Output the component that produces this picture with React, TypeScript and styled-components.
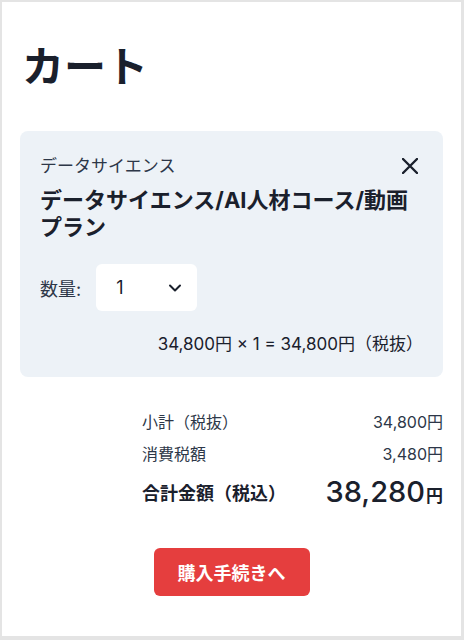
import React, { useState } from 'react';
import styled, { createGlobalStyle } from 'styled-components';

const GlobalStyle = createGlobalStyle`
  html, body {
    margin: 0;
    padding: 0;
    background: #e4e4e4;
  }
  body {
    font-family: 'Inter', 'Noto Sans CJK JP', sans-serif;
    color: #1a202c;
  }
  #root {
    padding: 2px 3px 4px 2px;
  }
`;

const Panel = styled.div`
  background: #ffffff;
  min-height: 634px;
  box-sizing: border-box;
  padding: 40px 18px 20px;
  display: flex;
  flex-direction: column;
`;

const Title = styled.h1`
  margin: 0 0 39px 2px;
  font-size: 42px;
  line-height: 50px;
  font-weight: 700;
`;

const Card = styled.div`
  background: #edf2f7;
  border-radius: 8px;
  padding: 22px 20px 21px;
`;

const CardHeader = styled.div`
  display: flex;
  align-items: center;
  justify-content: space-between;
`;

const Category = styled.div`
  font-size: 17px;
  line-height: 26px;
  color: #2d3748;
`;

const RemoveButton = styled.button`
  border: none;
  background: none;
  padding: 0;
  margin-right: 5px;
  width: 16px;
  height: 16px;
  display: flex;
  cursor: pointer;
  color: #1a202c;
`;

const ProductName = styled.div`
  margin-top: 8px;
  font-size: 22px;
  line-height: 27px;
  font-weight: 700;
  padding-right: 12px;
`;

const QtyRow = styled.div`
  display: flex;
  align-items: center;
  gap: 15px;
  margin-top: 23px;
`;

const QtyLabel = styled.span`
  font-size: 18px;
  color: #2d3748;
`;

const QtySelect = styled.div`
  width: 101px;
  height: 47px;
  box-sizing: border-box;
  background: #ffffff;
  border-radius: 6px;
  display: flex;
  align-items: center;
  justify-content: space-between;
  padding: 0 15px 0 20px;
  font-size: 18px;
  cursor: pointer;
`;

const LinePrice = styled.div`
  margin-top: 21px;
  text-align: right;
  font-size: 17px;
  line-height: 24px;
  color: #1a202c;
`;

const Summary = styled.div`
  width: 301px;
  margin: 29px 0 0 auto;
`;

const SummaryRow = styled.div`
  display: flex;
  justify-content: space-between;
  align-items: baseline;
  font-size: 16px;
  line-height: 32px;
  color: #2d3748;
`;

const TotalRow = styled.div`
  display: flex;
  justify-content: space-between;
  align-items: center;
  margin-top: 2px;
  line-height: 40px;
`;

const TotalLabel = styled.span`
  font-size: 18px;
  font-weight: 700;
`;

const TotalAmount = styled.span`
  font-size: 29px;
  font-weight: 500;
`;

const Yen = styled.span`
  font-size: 17px;
  font-weight: 700;
  margin-left: 1px;
`;

const Actions = styled.div`
  display: flex;
  justify-content: center;
  margin-top: 32px;
`;

const CheckoutButton = styled.button`
  height: 48px;
  padding: 0 24px;
  border: none;
  border-radius: 6px;
  background: #e53e3e;
  color: #ffffff;
  font-family: inherit;
  font-size: 18px;
  font-weight: 700;
  cursor: pointer;
`;

const CloseIcon: React.FC = () => (
  <svg width="16" height="16" viewBox="0 0 16 16" fill="none">
    <path
      d="M1 1L15 15M15 1L1 15"
      stroke="currentColor"
      strokeWidth="2.4"
      strokeLinecap="round"
    />
  </svg>
);

const Chevron: React.FC = () => (
  <svg width="14" height="8" viewBox="0 0 14 8" fill="none">
    <path
      d="M2 1.5L7 6.5L12 1.5"
      stroke="#1a202c"
      strokeWidth="2"
      strokeLinecap="round"
      strokeLinejoin="round"
    />
  </svg>
);

const App: React.FC = () => {
  const [quantity] = useState(1);
  const price = 34800;
  const subtotal = price * quantity;
  const tax = Math.round(subtotal * 0.1);
  const fmt = (n: number) => n.toLocaleString('en-US');

  return (
    <>
      <GlobalStyle />
      <Panel>
        <Title>カート</Title>
        <Card>
          <CardHeader>
            <Category>データサイエンス</Category>
            <RemoveButton aria-label="削除">
              <CloseIcon />
            </RemoveButton>
          </CardHeader>
          <ProductName>データサイエンス/AI人材コース/動画プラン</ProductName>
          <QtyRow>
            <QtyLabel>数量:</QtyLabel>
            <QtySelect>
              <span>{quantity}</span>
              <Chevron />
            </QtySelect>
          </QtyRow>
          <LinePrice>
            {fmt(price)}円 × {quantity} = {fmt(subtotal)}円（税抜）
          </LinePrice>
        </Card>
        <Summary>
          <SummaryRow>
            <span>小計（税抜）</span>
            <span>{fmt(subtotal)}円</span>
          </SummaryRow>
          <SummaryRow>
            <span>消費税額</span>
            <span>{fmt(tax)}円</span>
          </SummaryRow>
          <TotalRow>
            <TotalLabel>合計金額（税込）</TotalLabel>
            <TotalAmount>
              {fmt(subtotal + tax)}
              <Yen>円</Yen>
            </TotalAmount>
          </TotalRow>
        </Summary>
        <Actions>
          <CheckoutButton>購入手続きへ</CheckoutButton>
        </Actions>
      </Panel>
    </>
  );
};

export default App;
